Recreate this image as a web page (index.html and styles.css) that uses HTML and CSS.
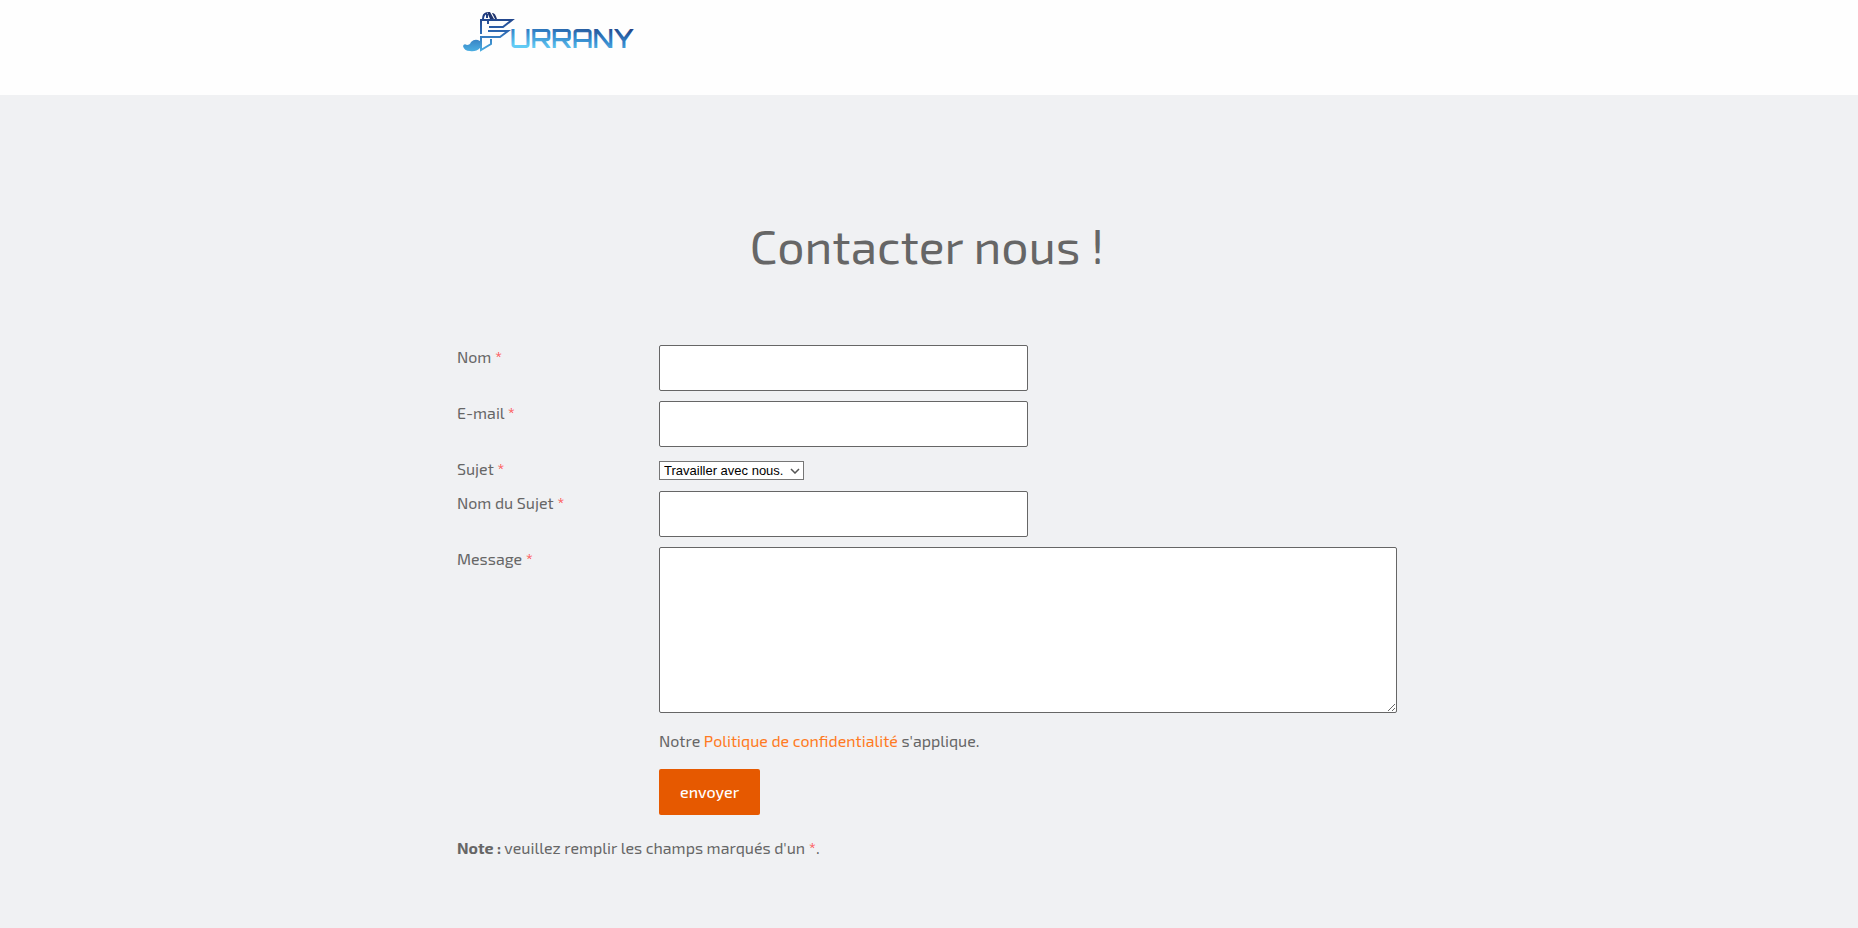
FILE: index.html
```html
<!DOCTYPE html>
<html lang="fr">
<head>
<meta charset="utf-8">
<meta name="viewport" content="width=device-width, initial-scale=1">
<title>Furrany - Contact</title>
<link rel="stylesheet" href="styles.css">
</head>
<body>
<header class="site-header">
  <div class="container">
    <a class="logo" href="#" aria-label="Furrany">
      <svg class="logo-art" viewBox="0 0 184 48" width="184" height="48">
        <defs>
          <linearGradient id="mark" x1="0" y1="6" x2="0" y2="48" gradientUnits="userSpaceOnUse">
            <stop offset="0" stop-color="#1c3274"/>
            <stop offset=".45" stop-color="#2b62ad"/>
            <stop offset="1" stop-color="#4db4e6"/>
          </linearGradient>
          <linearGradient id="word" x1="105" y1="46" x2="109" y2="14" gradientUnits="userSpaceOnUse">
            <stop offset="0" stop-color="#62ccf5"/>
            <stop offset=".5" stop-color="#3182c8"/>
            <stop offset="1" stop-color="#203b7c"/>
          </linearGradient>
        </defs>
        <g fill="none" stroke="url(#mark)" stroke-width="2">
          <path d="M24 29V15H55L46 22H32"/>
          <path d="M31 16V19M24 32H43L51 26H31"/>
          <path d="M24 31V45L34 39V34"/>
          <path d="M26 14Q26 9 30 8M30 13V9"/>
        </g>
        <path fill="#20366f" d="M30 7L33 7L37 14H33ZM35 8Q38 7 40 14H38Z"/>
        <path fill="url(#mark)" d="M6 41Q7 38 10 40Q13 40 14 37Q18 33 23 36V43Q19 47 13 46Q7 46 6 41Z"/>
        <text class="logo-word" x="53" y="43" fill="url(#word)">URRANY</text>
      </svg>
    </a>
  </div>
</header>

<main class="container page">
  <h1 class="title">Contacter nous !</h1>
  <form class="form">
    <div class="row">
      <label class="label" for="name">Nom <span class="required">*</span></label>
      <div class="field"><input class="input" id="name" type="text" required></div>
    </div>
    <div class="row">
      <label class="label" for="email">E-mail <span class="required">*</span></label>
      <div class="field"><input class="input" id="email" type="email" required></div>
    </div>
    <div class="row">
      <label class="label" for="subject">Sujet <span class="required">*</span></label>
      <div class="field select-field">
        <select class="select" id="subject" required><option>Travailler avec nous.</option></select>
        <svg class="chevron" viewBox="0 0 10 6" width="10" height="6" fill="none" stroke="#555" stroke-width="1.5"><path d="M1 1L5 5L9 1"/></svg>
      </div>
    </div>
    <div class="row">
      <label class="label" for="subject-name">Nom du Sujet <span class="required">*</span></label>
      <div class="field"><input class="input" id="subject-name" type="text" required></div>
    </div>
    <div class="row">
      <label class="label" for="message">Message <span class="required">*</span></label>
      <div class="field"><textarea class="input message" id="message" required></textarea></div>
    </div>
    <div class="actions">
      <p class="text">Notre <a class="link" href="#">Politique de confidentialité</a> s'applique.</p>
      <button class="submit" type="submit">envoyer</button>
    </div>
  </form>
  <p class="text note"><strong>Note :</strong> veuillez remplir les champs marqués d'un <span class="required">*</span>.</p>
</main>
</body>
</html>
```
FILE: styles.css
```css
* {
  box-sizing: border-box;
}

body {
  margin: 0;
  background: #f0f1f3;
  color: #666;
  font-family: "Exo 2", Roboto, sans-serif;
  font-size: 16px;
  line-height: 24px;
}

.container {
  max-width: 944px;
  margin: 0 auto;
  padding-right: 4px;
}

.site-header {
  background: #fefefe;
  padding: 5px 0 42px;
}

.logo,
.logo-art {
  display: block;
  width: 184px;
}

.logo-art {
  overflow: visible;
}

.logo-word {
  font-family: Orbitron, Montserrat, "DejaVu Sans", sans-serif;
  font-size: 25px;
  font-weight: 600;
}

.page {
  padding-top: 118px;
  padding-bottom: 64px;
}

.title {
  margin: 0 0 68px;
  font-size: 48px;
  font-weight: 400;
  line-height: 64px;
  text-align: center;
}

.form {
  display: flex;
  flex-direction: column;
  gap: 10px;
}

.row {
  display: grid;
  grid-template-columns: 202px 1fr;
  align-items: start;
}

.field {
  display: flex;
}

.input {
  width: 50%;
  height: 46px;
  padding: 10px;
  border: 1px solid #666;
  border-radius: 2px;
  background: #fff;
  color: #666;
  font: inherit;
}

.message {
  width: 100%;
  height: 166px;
  resize: vertical;
}

.select-field {
  position: relative;
  width: 145px;
  padding-top: 4px;
}

.select {
  width: 100%;
  height: 19px;
  padding: 0 4px;
  appearance: none;
  border: 1px solid #767676;
  border-radius: 0;
  background: #fff;
  color: #000;
  font: 13px "Liberation Sans", Arial, sans-serif;
}

.chevron {
  position: absolute;
  top: 11px;
  right: 4px;
  pointer-events: none;
}

.required {
  color: #f44;
}

.actions {
  display: flex;
  flex-direction: column;
  align-items: flex-start;
  gap: 16px;
  margin-left: 202px;
  padding-top: 6px;
}

.text {
  margin: 0;
}

.link {
  color: #ff7a22;
  text-decoration: none;
}

.submit {
  height: 46px;
  padding: 0 21px;
  border: 0;
  border-radius: 2px;
  background: #e65900;
  color: #fff;
  font: inherit;
  font-weight: 500;
}

.note {
  margin-top: 21px;
}
```
